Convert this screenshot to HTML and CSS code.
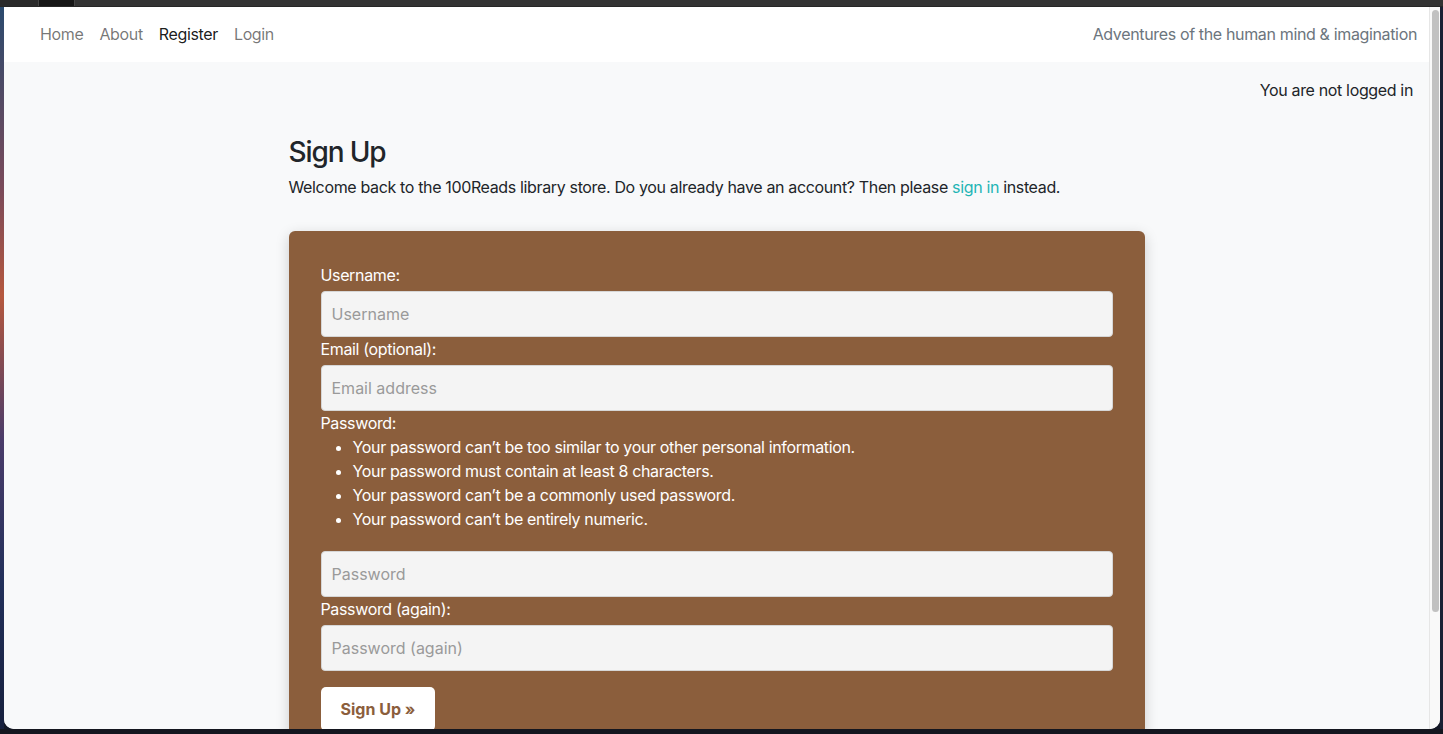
FILE: index.html
```html
<!DOCTYPE html>
<html lang="en">
<head>
<meta charset="utf-8">
<title>Sign Up - 100Reads</title>
<link rel="stylesheet" href="styles.css">
</head>
<body>
<div class="screen">
  <div class="topbar"><span class="tb-a"></span><span class="tb-b"></span></div>
  <div class="desk-left"></div>
  <div class="window">
    <div class="viewport">
      <nav class="navbar">
        <ul class="nav-links">
          <li><a class="nav-link" href="#">Home</a></li>
          <li><a class="nav-link" href="#">About</a></li>
          <li><a class="nav-link active" href="#">Register</a></li>
          <li><a class="nav-link" href="#">Login</a></li>
        </ul>
        <span class="tagline">Adventures of the human mind &amp; imagination</span>
      </nav>
      <p class="status">You are not logged in</p>
      <main class="content">
        <h1 class="title">Sign Up</h1>
        <p class="intro">Welcome back to the 100Reads library store. Do you already have an account? Then please <a class="link" href="#">sign in</a> instead.</p>
        <form class="card">
          <label class="label" for="u">Username:</label>
          <input class="input" id="u" type="text" placeholder="Username">
          <label class="label" for="e">Email (optional):</label>
          <input class="input" id="e" type="email" placeholder="Email address">
          <label class="label" for="p1">Password:</label>
          <ul class="help">
            <li>Your password can’t be too similar to your other personal information.</li>
            <li>Your password must contain at least 8 characters.</li>
            <li>Your password can’t be a commonly used password.</li>
            <li>Your password can’t be entirely numeric.</li>
          </ul>
          <input class="input" id="p1" type="password" placeholder="Password">
          <label class="label" for="p2">Password (again):</label>
          <input class="input" id="p2" type="password" placeholder="Password (again)">
          <button class="btn" type="button">Sign Up »</button>
        </form>
      </main>
    </div>
    <div class="scrollbar"><div class="thumb"></div></div>
  </div>
  <div class="desk-right"></div>
  <div class="dock"></div>
</div>
</body>
</html>
```
FILE: styles.css
```css
* { box-sizing: border-box; }
html, body { margin: 0; padding: 0; }
body {
  width: 1443px;
  height: 734px;
  overflow: hidden;
  background: #141826;
  font-family: "Inter", "Noto Sans", sans-serif;
  font-size: 16px;
  line-height: 24px;
  letter-spacing: -0.022em;
  color: #212529;
}
.screen {
  display: grid;
  grid-template-columns: 4px 1436px 3px;
  grid-template-rows: 7px 722px 5px;
  width: 1443px;
  height: 734px;
}
.topbar {
  grid-column: 1 / 4;
  background: #333333;
  border-bottom: 1px solid #262626;
  display: flex;
}
.tb-a { width: 39px; background: #2a2a2a; border-right: 1px solid #444; }
.tb-b { width: 36px; background: #161616; border-right: 1px solid #444; }
.desk-left {
  background: linear-gradient(#2b4a6e 0%, #7a4a5a 25%, #b5583e 40%, #4a3c6a 60%, #22305a 80%, #17203d 100%);
}
.desk-right { background: #1a1f33; }
.dock {
  grid-column: 1 / 4;
  background: #14161f;
}
.window {
  display: flex;
  background: #f8f9fa;
  border-radius: 0 0 10px 10px;
  overflow: hidden;
}
.viewport {
  flex: 1;
  overflow: hidden;
  background: #f8f9fa;
}
.scrollbar {
  width: 11px;
  background: #f9f9f9;
  border-left: 1px solid #e6e6e6;
  padding: 3px 1px 0 2px;
}
.thumb {
  height: 602px;
  background: #c1c1c1;
  border-radius: 4px;
}
.navbar {
  height: 55px;
  background: #ffffff;
  display: flex;
  align-items: center;
  justify-content: space-between;
  padding: 0 12px 2px 28px;
}
.nav-links {
  list-style: none;
  display: flex;
  margin: 0;
  padding: 0;
}
.nav-link {
  display: block;
  padding: 8px;
  color: rgba(0, 0, 0, 0.55);
  text-decoration: none;
}
.nav-link.active { color: rgba(0, 0, 0, 0.9); }
.tagline { color: #6c757d; }
.status {
  margin: 16px 0 0;
  padding-right: 16px;
  text-align: right;
}
.content {
  width: 856px;
  margin: 0 auto;
}
.title {
  margin: 34px 0 5px;
  font-size: 28px;
  line-height: 1.2;
  font-weight: 500;
  letter-spacing: -0.04em;
}
.intro { margin: 0 0 32px; }
.link { color: #1fb5b5; text-decoration: none; }
.card {
  background: #8b5e3c;
  border-radius: 6px;
  box-shadow: 0 4px 14px rgba(0, 0, 0, 0.18);
  padding: 32px 32px 40px;
  display: flex;
  flex-direction: column;
  align-items: stretch;
  color: #ffffff;
}
.label { display: block; margin-bottom: 4px; }
.input {
  display: block;
  width: 100%;
  height: 46px;
  padding: 10px;
  font: inherit;
  color: #212529;
  background: #f4f4f4;
  border: 1px solid #d6d6d6;
  border-radius: 4px;
}
.input::placeholder { color: #9a9a9a; }
.help {
  margin: -4px 0 20px;
  padding-left: 32px;
}
.btn {
  align-self: flex-start;
  margin-top: 16px;
  padding: 10px 20px;
  font: inherit;
  font-weight: 700;
  color: #8b5e3c;
  background: #ffffff;
  border: none;
  border-radius: 5px;
}
```
